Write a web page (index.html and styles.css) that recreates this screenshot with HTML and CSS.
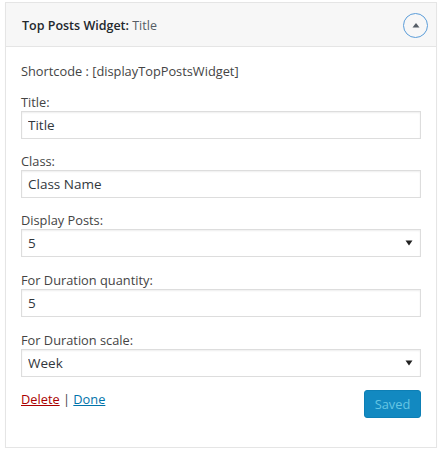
FILE: index.html
```html
<!DOCTYPE html>
<html>
<head>
<meta charset="utf-8">
<link rel="stylesheet" href="styles.css">
</head>
<body>
<div class="widget">
  <div class="widget-top">
    <h3 class="widget-title">Top Posts Widget: <span class="in-title">Title</span></h3>
    <button class="toggle" aria-label="Toggle">
      <svg width="10" height="8" viewBox="0 0 10 8"><path d="M1.5 6.5 L5 2 L8.5 6.5 Z" fill="#555d66"/></svg>
    </button>
  </div>
  <div class="widget-inside">
    <p class="shortcode">Shortcode : [displayTopPostsWidget]</p>
    <div class="field">
      <label>Title:</label>
      <input type="text" value="Title">
    </div>
    <div class="field">
      <label>Class:</label>
      <input type="text" value="Class Name">
    </div>
    <div class="field">
      <label>Display Posts:</label>
      <select><option>5</option></select>
    </div>
    <div class="field">
      <label>For Duration quantity:</label>
      <input type="text" value="5">
    </div>
    <div class="field">
      <label>For Duration scale:</label>
      <select><option>Week</option></select>
    </div>
    <div class="actions">
      <div class="links"><a class="delete" href="#">Delete</a> | <a class="done" href="#">Done</a></div>
      <button class="saved" disabled>Saved</button>
    </div>
  </div>
</div>
</body>
</html>
```
FILE: styles.css
```css
html, body {
  margin: 0;
  padding: 0;
  background: #fff;
}
body {
  font-family: "Open Sans", "Noto Sans", sans-serif;
  font-size: 12.8px;
  color: #444;
}
.widget {
  margin: 2px 7px 0 5px;
  border: 1px solid #e5e5e5;
  box-shadow: 0 1px 1px rgba(0,0,0,.04);
  background: #fff;
  height: 446px;
  box-sizing: border-box;
}
.widget-top {
  background: #f7f7f7;
  border-bottom: 1px solid #e5e5e5;
  height: 44px;
  box-sizing: border-box;
  display: flex;
  align-items: center;
  justify-content: space-between;
  padding: 0 8px 0 16px;
}
.widget-title {
  margin: 0;
  font-size: 12.5px;
  font-weight: 600;
  color: #23282d;
  padding-top: 1px;
}
.in-title {
  font-weight: 400;
  color: #555d66;
}
.toggle {
  width: 25px;
  height: 25px;
  border-radius: 50%;
  border: 1.5px solid #5b9dd9;
  background: transparent;
  display: flex;
  align-items: center;
  justify-content: center;
  padding: 0 0 1px 0;
  box-sizing: border-box;
  margin-top: 1px;
}
.widget-inside {
  padding: 0 15px;
}
.shortcode {
  margin: 16px 0 0;
  line-height: 17px;
}
.field {
  display: flex;
  flex-direction: column;
  margin-top: 14px;
}
.field:nth-child(n+5) {
  margin-top: 15px;
}
.field label {
  line-height: 17px;
}
input, select {
  font-family: inherit;
  font-size: 13.5px;
  color: #32373c;
  height: 28px;
  box-sizing: border-box;
  border: 1px solid #ddd;
  box-shadow: inset 0 1px 2px rgba(0,0,0,.07);
  background-color: #fff;
  padding: 0 6px;
  margin: 0;
  border-radius: 0;
  outline: none;
}
select {
  appearance: none;
  -webkit-appearance: none;
  padding: 0 24px 0 6px;
  background-image: url("data:image/svg+xml,%3Csvg xmlns='http://www.w3.org/2000/svg' width='8' height='6' viewBox='0 0 8 6'%3E%3Cpath d='M0.5 0.5 L7.5 0.5 L4 5.5 Z' fill='%23222'/%3E%3C/svg%3E");
  background-repeat: no-repeat;
  background-position: right 7px center;
}
.actions {
  display: flex;
  justify-content: space-between;
  align-items: flex-start;
  margin-top: 13px;
}
.links {
  line-height: 17px;
  margin-top: 1px;
}
.links a {
  text-decoration: underline;
}
.delete { color: #a00; }
.done { color: #0073aa; }
.saved {
  font-family: inherit;
  font-size: 12.8px;
  width: 57px;
  height: 28px;
  border-radius: 3px;
  background: #1289c1;
  border: 1px solid #0d7fb5;
  color: #66c6e4;
  padding: 0;
}
```
